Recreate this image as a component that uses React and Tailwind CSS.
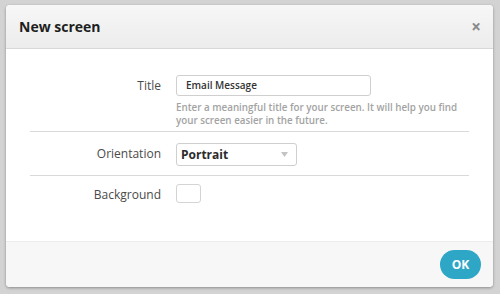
import React from 'react';

const font = { fontFamily: '"Open Sans", "Liberation Sans", sans-serif' };

const Row = ({ label, children, className = '' }) => (
  <div className={`flex items-start ${className}`}>
    <div className="w-[131px] shrink-0 text-right text-[12px] leading-[21px] text-[#4a4a4a]">{label}</div>
    <div className="ml-[15px]">{children}</div>
  </div>
);

const App = () => {
  return (
    <div className="h-[294px] w-[500px] bg-[#d3d3d3] pl-[6px] pt-[5px]" style={font}>
      <div className="flex h-[282px] w-[487px] flex-col overflow-hidden rounded-[4px] bg-white shadow-[0_1px_3px_rgba(0,0,0,0.35)]">
        {/* Header */}
        <div className="flex h-[44px] shrink-0 items-center justify-between border-b border-[#d8d8d8] bg-gradient-to-b from-[#f7f7f7] to-[#ececec] pl-[13px] pr-[12px]">
          <h1 className="text-[14px] font-bold text-[#1e1e1e]">New screen</h1>
          <span className="text-[17px] font-bold leading-none text-[#8a8a8a]">×</span>
        </div>

        {/* Body */}
        <div className="flex-1 px-[24px]">
          <Row label="Title" className="border-b border-[#d9d9d9] pb-[4px] pt-[26px]">
            <div className="flex h-[21px] w-[195px] items-center rounded-[3px] border border-[#cfcfcf] pl-[9px] text-[10px] font-semibold text-[#333]">
              Email Message
            </div>
            <p className="mt-[5px] text-[9.8px] font-semibold leading-[13px] text-[#a3a3a3]">
              Enter a meaningful title for your screen. It will help you find
              <br />
              your screen easier in the future.
            </p>
          </Row>

          <Row label="Orientation" className="border-b border-[#d9d9d9] pb-[9px] pt-[11px]">
            <div className="flex h-[23px] w-[121px] items-center justify-between rounded-[3px] border border-[#cfcfcf] pl-[4px] pr-[8px] text-[12px] font-bold text-[#2b2b2b]">
              Portrait
              <svg width="7" height="5" viewBox="0 0 7 5">
                <path d="M0 0 L7 0 L3.5 5 Z" fill="#c4c4c4" />
              </svg>
            </div>
          </Row>

          <Row label="Background" className="pt-[8px]">
            <div className="h-[19px] w-[25px] rounded-[3px] border border-[#d4d4d4] bg-white" />
          </Row>
        </div>

        {/* Footer */}
        <div className="flex h-[46px] shrink-0 items-center justify-end border-t border-[#ececec] bg-[#f7f7f7] pr-[12px]">
          <button className="h-[29px] w-[41px] rounded-full bg-[#2ea6c6] text-[12px] font-bold text-white">OK</button>
        </div>
      </div>
    </div>
  );
};

export default App;
